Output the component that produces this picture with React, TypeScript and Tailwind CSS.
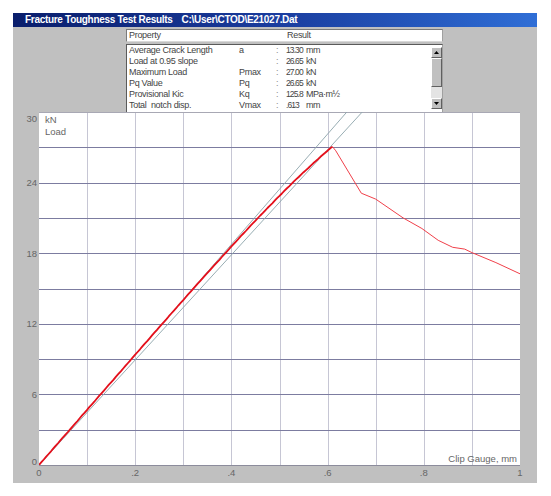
import React from "react";

const X = (v: number) => 26 + v * 481;
const Y = (l: number) => 353 - (l * 353) / 30;
const r = (n: number) => Math.round(n) + 0.5;

function risePath() {
  const pts: string[] = [];
  for (let i = 0; i <= 122; i++) {
    const x = i * 0.005;
    const l = 46.9 * x * (1 - 0.05 * Math.pow(x / 0.598, 4));
    const wob = i > 2 ? Math.sin(i * 1.7) * 0.12 : 0;
    pts.push(`${X(x).toFixed(1)},${(Y(l) + wob).toFixed(1)}`);
  }
  return "M" + pts.join(" L");
}

const fall: [number, number][] = [
  [0.61, 27.06],
  [0.617, 26.7],
  [0.67, 23.1],
  [0.7, 22.6],
  [0.757, 21.0],
  [0.796, 20.1],
  [0.83, 19.1],
  [0.86, 18.5],
  [0.885, 18.35],
  [0.9, 18.05],
  [0.95, 17.2],
  [1.0, 16.25],
];

const rows = [
  ["Average Crack Length", "a", "13.30", "mm"],
  ["Load at 0.95 slope", "", "26.65", "kN"],
  ["Maximum Load", "Pmax", "27.00", "kN"],
  ["Pq Value", "Pq", "26.65", "kN"],
  ["Provisional Kic", "Kq", "125.8", "MPa·m½"],
  ["Total  notch disp.", "Vmax", ".613", "mm"],
];

function Chart() {
  const hLines = [3, 6, 9, 12, 15, 18, 21, 24, 27];
  const vLines = [0.1, 0.2, 0.3, 0.4, 0.5, 0.6, 0.7, 0.8, 0.9];
  const yLabels: [string, number][] = [
    ["30", 10],
    ["24", Y(24) + 3.5],
    ["18", Y(18) + 3.5],
    ["12", Y(12) + 3.5],
    ["6", Y(6) + 3.5],
    ["0", 352.5],
  ];
  const xLabels: [string, number][] = [
    ["0", 0],
    [".2", 0.2],
    [".4", 0.4],
    [".6", 0.6],
    [".8", 0.8],
    ["1", 1],
  ];
  const fallPath = "M" + fall.map(([x, l]) => `${X(x).toFixed(1)},${Y(l).toFixed(1)}`).join(" L");
  return (
    <svg width={524} height={371} className="block" style={{ fontFamily: '"Liberation Sans", Arial, sans-serif' }}>
      <defs>
        <clipPath id="plot">
          <rect x={26} y={0} width={481} height={353} />
        </clipPath>
      </defs>
      <rect x={26} y={0} width={481} height={354} fill="#ffffff" />
      {vLines.map((v) => (
        <line key={v} x1={r(X(v))} x2={r(X(v))} y1={0} y2={353} stroke="#c6c6d4" strokeWidth={1} />
      ))}
      {hLines.map((l) => (
        <line key={l} x1={26} x2={507} y1={r(Y(l))} y2={r(Y(l))} stroke="#7c7ca0" strokeWidth={1} />
      ))}
      <line x1={26} x2={507} y1={0.5} y2={0.5} stroke="#a8a8b4" strokeWidth={1} />
      <line x1={26} x2={507} y1={353.5} y2={353.5} stroke="#8c8c9c" strokeWidth={1} />
      <g clipPath="url(#plot)">
        <line x1={X(0)} y1={Y(0)} x2={X(0.64)} y2={Y(30)} stroke="#8ca4aa" strokeWidth={0.9} />
        <line x1={X(0)} y1={Y(0)} x2={X(0.672)} y2={Y(30)} stroke="#8ca4aa" strokeWidth={0.9} />
        <path d={risePath()} fill="none" stroke="#e4101c" strokeWidth={1.8} strokeLinejoin="round" />
        <path d={fallPath} fill="none" stroke="#f0404a" strokeWidth={1} strokeLinejoin="round" />
      </g>
      <text x={32} y={11} fontSize={9.5} fill="#666">kN</text>
      <text x={32} y={23} fontSize={9.5} fill="#666">Load</text>
      <text x={504} y={350} fontSize={9.5} fill="#666" textAnchor="end">Clip Gauge, mm</text>
      {yLabels.map(([t, y]) => (
        <text key={t} x={24} y={y} fontSize={9.5} fill="#666" textAnchor="end">{t}</text>
      ))}
      {xLabels.map(([t, v]) => (
        <text key={t} x={X(v)} y={364} fontSize={9.5} fill="#666" textAnchor="middle">{t}</text>
      ))}
    </svg>
  );
}

function ArrowUp() {
  return (
    <svg width="5" height="3" viewBox="0 0 5 3"><path d="M2.5 0 L5 3 L0 3 Z" fill="#000" /></svg>
  );
}
function ArrowDown() {
  return (
    <svg width="5" height="3" viewBox="0 0 5 3"><path d="M0 0 L5 0 L2.5 3 Z" fill="#000" /></svg>
  );
}

export default function App() {
  return (
    <div className="w-[551px] h-[496px] bg-white pt-[13px] pl-[13px]" style={{ fontFamily: '"Liberation Sans", Arial, sans-serif' }}>
      <div className="w-[524px] h-[470px] bg-[#c0c0c0] flex flex-col">
        <div className="h-[14px] bg-gradient-to-r from-[#0a1e6c] via-[#1a3c9e] to-[#2f6ed6] text-white font-bold text-[10px] tracking-[-0.3px] pl-[12px] flex items-center leading-none">
          <span>Fracture Toughness Test Results</span>
          <span className="ml-[9px]">C:\User\CTOD\E21027.Dat</span>
        </div>
        <div className="h-[85px] pl-[113px] pt-[2px] flex flex-col">
          <div className="w-[317px] h-[13px] bg-white border-t border-l border-[#7a7a7a] border-r border-r-[#a0a0a0] border-b border-b-[#d8d8d8] flex items-center text-[9px] text-[#444] tracking-[-0.3px] leading-none">
            <span className="w-[160px] pl-[2px]">Property</span>
            <span>Result</span>
          </div>
          <div className="mt-[2px] w-[317px] h-[68px] bg-white border-t border-l border-[#5a5a5a] border-r border-r-[#a0a0a0] flex">
            <div className="flex-1 pl-[2px] text-[9px] text-[#444] leading-[11px] tracking-[-0.3px] overflow-hidden">
              {rows.map(([n, s, v, u]) => (
                <div key={n} className="flex h-[11px] whitespace-nowrap">
                  <span className="w-[110px] whitespace-pre">{n}</span>
                  <span className="w-[37px]">{s}</span>
                  <span className="w-[10px] text-[#888]">:</span>
                  <span className="w-[20px] text-[8.5px] tracking-[-0.9px]">{v}</span>
                  <span className="tracking-[-0.5px]">{u}</span>
                </div>
              ))}
            </div>
            <div className="w-[11px] mt-[2px] mb-[3px] flex flex-col bg-[#e4e4e4]">
              <div className="h-[11px] bg-[#c0c0c0] border-t border-l border-white border-r border-b border-r-[#606060] border-b-[#606060] flex items-center justify-center">
                <ArrowUp />
              </div>
              <div className="h-[29px] bg-[#c0c0c0] border-t border-l border-white border-r border-b border-r-[#606060] border-b-[#606060]" />
              <div className="flex-1" />
              <div className="h-[11px] bg-[#c0c0c0] border-t border-l border-white border-r border-b border-r-[#606060] border-b-[#606060] flex items-center justify-center">
                <ArrowDown />
              </div>
            </div>
          </div>
        </div>
        <Chart />
      </div>
    </div>
  );
}
